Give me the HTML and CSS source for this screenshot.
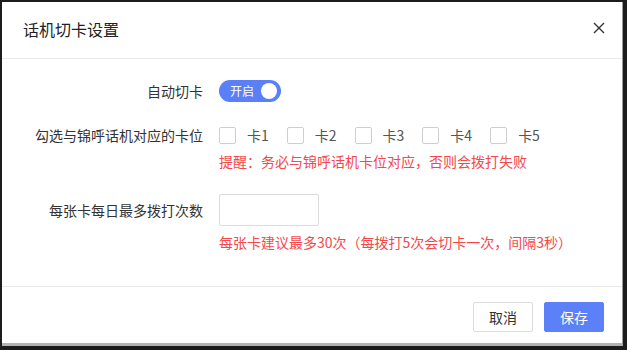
FILE: index.html
```html
<!DOCTYPE html>
<html lang="zh-CN">
<head>
<meta charset="utf-8">
<title>话机切卡设置</title>
<link rel="stylesheet" href="styles.css">
</head>
<body>
<div class="frame">
  <div class="dialog">
    <div class="dialog-header">
      <span class="dialog-title">话机切卡设置</span>
      <button class="close" aria-label="关闭">
        <svg width="12" height="12" viewBox="0 0 12 12"><path d="M1 1L11 11M11 1L1 11" stroke="#333" stroke-width="1.4" fill="none"/></svg>
      </button>
    </div>
    <div class="dialog-body">
      <div class="form-item item-switch">
        <label class="form-label">自动切卡</label>
        <div class="form-control">
          <div class="switch"><span class="switch-text">开启</span><span class="switch-knob"></span></div>
        </div>
      </div>
      <div class="form-item item-cards">
        <label class="form-label">勾选与锦呼话机对应的卡位</label>
        <div class="form-control">
          <div class="check-row">
            <label class="check"><span class="box"></span><span class="check-text">卡1</span></label>
            <label class="check"><span class="box"></span><span class="check-text">卡2</span></label>
            <label class="check"><span class="box"></span><span class="check-text">卡3</span></label>
            <label class="check"><span class="box"></span><span class="check-text">卡4</span></label>
            <label class="check"><span class="box"></span><span class="check-text">卡5</span></label>
          </div>
          <div class="hint hint-cards">提醒：务必与锦呼话机卡位对应，否则会拨打失败</div>
        </div>
      </div>
      <div class="form-item item-count">
        <label class="form-label">每张卡每日最多拨打次数</label>
        <div class="form-control">
          <input class="text-input" type="text">
          <div class="hint hint-count">每张卡建议最多30次（每拨打5次会切卡一次，间隔3秒）</div>
        </div>
      </div>
    </div>
    <div class="dialog-footer">
      <button class="btn btn-default">取消</button>
      <button class="btn btn-primary">保存</button>
    </div>
  </div>
</div>
</body>
</html>
```
FILE: styles.css
```css
html, body {
  margin: 0;
  padding: 0;
  background: #1c1c1c;
  width: 627px;
  height: 350px;
  overflow: hidden;
}
* { box-sizing: border-box; }

.frame {
  padding: 2px 0 0 2px;
}

.dialog {
  width: 621px;
  height: 344px;
  background: #fff;
  border-right: 1px solid #9a9a9a;
  border-bottom: 3px solid #b3b3b3;
  font-family: "Noto Sans CJK SC", "Microsoft YaHei", sans-serif;
  color: #333;
  display: flex;
  flex-direction: column;
}

.dialog-header {
  height: 57px;
  border-bottom: 1px solid #e9e9e9;
  display: flex;
  align-items: center;
  justify-content: space-between;
  padding: 0 16px 2px 21px;
}
.dialog-title {
  font-size: 16px;
  line-height: 22px;
  color: #222;
}
.close {
  border: 0;
  background: none;
  padding: 0;
  width: 14px;
  height: 14px;
  display: flex;
  align-items: center;
  justify-content: center;
  margin-top: -2px;
}

.dialog-body {
  flex: 1;
  padding-top: 21px;
}

.form-item {
  display: flex;
  align-items: flex-start;
}
.form-label {
  width: 201px;
  text-align: right;
  font-size: 14px;
  color: #333;
  line-height: 22px;
  margin-right: 15px;
  flex: none;
}
.form-control {
  display: flex;
  flex-direction: column;
}

.switch {
  width: 62px;
  height: 22px;
  border-radius: 11px;
  background: #5a7ff7;
  display: flex;
  align-items: center;
  justify-content: space-between;
  padding: 0 4px 0 11px;
  margin-left: 1px;
}
.switch-text {
  color: #fff;
  font-size: 12px;
  line-height: 22px;
}
.switch-knob {
  width: 16px;
  height: 16px;
  border-radius: 50%;
  background: #fff;
}

.item-cards { margin-top: 22px; }
.check-row {
  display: flex;
  height: 22px;
  align-items: center;
  padding-left: 1px;
}
.check {
  display: flex;
  align-items: center;
  margin-right: 18px;
}
.box {
  width: 17px;
  height: 17px;
  border: 1px solid #cfcfcf;
  border-radius: 2px;
  background: #fff;
  margin-right: 11px;
}
.check-text {
  font-size: 14px;
  color: #555;
  line-height: 22px;
}

.hint {
  color: #f4484b;
  font-size: 14px;
  line-height: 20px;
}
.hint-cards { margin-top: 5px; padding-left: 1px; }

.item-count { margin-top: 23px; }
.item-count .form-label { line-height: 32px; }
.text-input {
  width: 100px;
  height: 32px;
  border: 1px solid #dcdcdc;
  border-radius: 2px;
  margin: 0 0 0 1px;
  padding: 0 8px;
  outline: none;
  font-family: inherit;
}
.hint-count { margin-top: 6px; padding-left: 1px; }

.dialog-footer {
  border-top: 1px solid #e9e9e9;
  height: 57px;
  display: flex;
  justify-content: flex-end;
  align-items: flex-start;
  padding: 15px 18px 0 0;
  gap: 11px;
}
.btn {
  width: 60px;
  height: 30px;
  border-radius: 2px;
  font-family: inherit;
  font-size: 14px;
  padding: 0;
  cursor: pointer;
}
.btn-default {
  background: #fff;
  border: 1px solid #dcdcdc;
  color: #333;
}
.btn-primary {
  background: #5b80f8;
  border: 1px solid #5b80f8;
  color: #fff;
}
```
